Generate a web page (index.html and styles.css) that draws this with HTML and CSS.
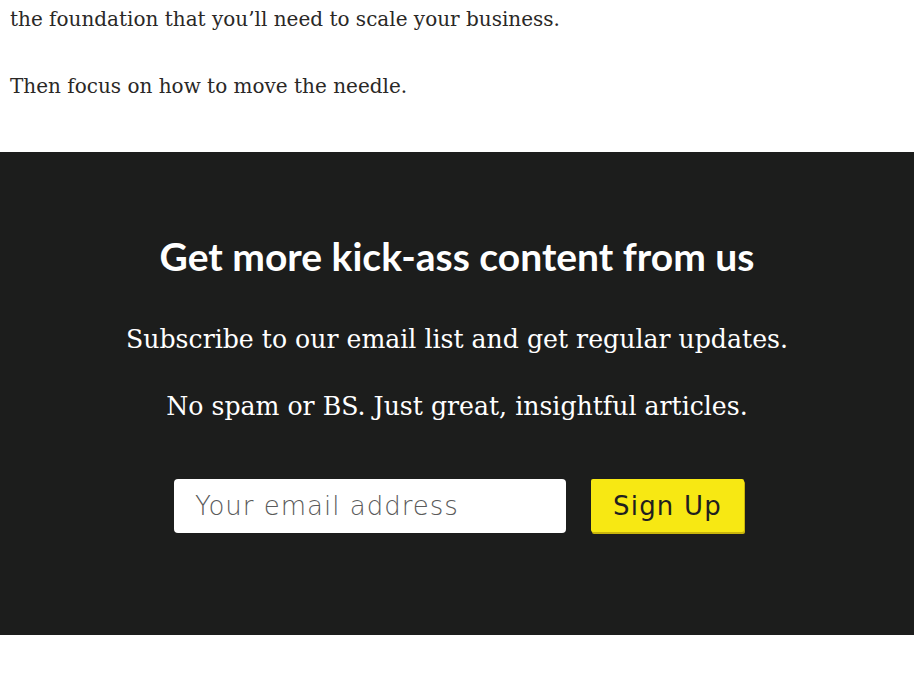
FILE: index.html
```html
<!DOCTYPE html>
<html lang="en">
<head>
<meta charset="utf-8">
<title>Subscribe</title>
<link rel="stylesheet" href="styles.css">
</head>
<body>
<div class="article">
  <p class="para first">the foundation that you’ll need to scale your business.</p>
  <p class="para">Then focus on how to move the needle.</p>
</div>
<section class="cta">
  <h2 class="cta-title">Get more kick-ass content from us</h2>
  <p class="cta-text">Subscribe to our email list and get regular updates.</p>
  <p class="cta-text">No spam or BS. Just great, insightful articles.</p>
  <form class="cta-form" onsubmit="return false;">
    <input class="cta-input" type="email" placeholder="Your email address">
    <button class="cta-button" type="submit">Sign Up</button>
  </form>
</section>
</body>
</html>
```
FILE: styles.css
```css
html, body {
  margin: 0;
  padding: 0;
  background: #ffffff;
}
body {
  font-family: "DejaVu Serif", "Liberation Serif", serif;
  color: #2a2826;
}
.article {
  padding: 2px 10px 0;
}
.para {
  margin: 0 0 33px;
  font-size: 20px;
  line-height: 34px;
}
.para:last-child {
  margin-bottom: 49px;
}
.cta {
  background: #1c1d1c;
  height: 483px;
  box-sizing: border-box;
  padding-top: 79px;
  display: flex;
  flex-direction: column;
  align-items: center;
  color: #ffffff;
}
.cta-title {
  margin: 0;
  font-family: "Lato", sans-serif;
  font-weight: 700;
  font-size: 39px;
  line-height: 50px;
}
.cta-text {
  margin: 42px 0 0;
  font-size: 25.2px;
  line-height: 34px;
}
.cta-text + .cta-text {
  margin-top: 33px;
}
.cta-form {
  margin-top: 55px;
  display: flex;
  gap: 25px;
  margin-left: 4px;
}
.cta-input {
  width: 392px;
  height: 54px;
  box-sizing: border-box;
  border: none;
  border-radius: 4px;
  background: #ffffff;
  padding: 0 21px;
  font-family: "DejaVu Sans", sans-serif;
  font-weight: 300;
  font-size: 26px;
  letter-spacing: 1px;
  color: #333;
  outline: none;
}
.cta-input::placeholder {
  color: #5a5a5a;
}
.cta-button {
  width: 153px;
  height: 53px;
  box-sizing: border-box;
  border: none;
  border-radius: 2px;
  background: #f7e813;
  box-shadow: 1px 2px 0 #c9b50c;
  font-family: "DejaVu Sans", sans-serif;
  font-size: 26px;
  letter-spacing: 1.2px;
  color: #1f1f1f;
  padding: 0;
  cursor: pointer;
}
```
